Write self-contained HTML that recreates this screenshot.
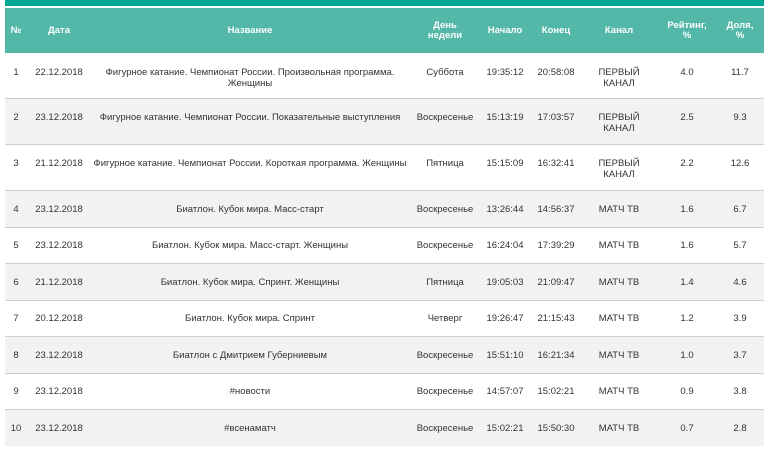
<!DOCTYPE html>
<html><head><meta charset="utf-8"><style>
body{margin:0;background:#fff;font-family:"Liberation Sans","DejaVu Sans",sans-serif;width:769px;height:449px;overflow:hidden;position:relative}
.top{position:absolute;left:5px;top:0;width:759px;height:6px;background:#00a694}
.hdr{position:absolute;left:5px;top:8px;width:759px;height:45px;background:#53b8a8}
.c{position:absolute;text-align:center;transform:translateX(-50%);white-space:nowrap;font-size:9.5px;color:#333;line-height:11px}
.h{color:#fff;font-weight:bold;font-size:9.5px;line-height:10px}
.row{position:absolute;left:5px;width:759px;border-bottom:1px solid #cfcfcf;box-sizing:border-box}
</style></head><body>
<div class="top"></div>
<div class="hdr"></div>
<div class="c h" style="left:16px;top:26px">№</div>
<div class="c h" style="left:59px;top:26px">Дата</div>
<div class="c h" style="left:250px;top:26px">Название</div>
<div class="c h" style="left:445px;top:21px">День<br>недели</div>
<div class="c h" style="left:505px;top:26px">Начало</div>
<div class="c h" style="left:556px;top:26px">Конец</div>
<div class="c h" style="left:619px;top:26px">Канал</div>
<div class="c h" style="left:687px;top:21px">Рейтинг,<br>%</div>
<div class="c h" style="left:740px;top:21px">Доля,<br>%</div>

<div class="row" style="top:53px;height:46px;background:#fff"></div>
<div class="row" style="top:99px;height:46px;background:#f2f2f2"></div>
<div class="row" style="top:145px;height:46px;background:#fff"></div>
<div class="row" style="top:191px;height:37px;background:#f2f2f2"></div>
<div class="row" style="top:228px;height:36px;background:#fff"></div>
<div class="row" style="top:264px;height:37px;background:#f2f2f2"></div>
<div class="row" style="top:301px;height:36px;background:#fff"></div>
<div class="row" style="top:337px;height:37px;background:#f2f2f2"></div>
<div class="row" style="top:374px;height:36px;background:#fff"></div>
<div class="row" style="top:410px;height:36px;background:#f2f2f2;border-bottom:none"></div>

<!-- row 1 -->
<div class="c" style="left:16px;top:67px">1</div><div class="c" style="left:59px;top:67px">22.12.2018</div>
<div class="c" style="left:250px;top:67px">Фигурное катание. Чемпионат России. Произвольная программа.<br>Женщины</div>
<div class="c" style="left:445px;top:67px">Суббота</div><div class="c" style="left:505px;top:67px">19:35:12</div><div class="c" style="left:556px;top:67px">20:58:08</div>
<div class="c" style="left:619px;top:67px">ПЕРВЫЙ<br>КАНАЛ</div><div class="c" style="left:687px;top:67px">4.0</div><div class="c" style="left:740px;top:67px">11.7</div>
<!-- row 2 -->
<div class="c" style="left:16px;top:112px">2</div><div class="c" style="left:59px;top:112px">23.12.2018</div>
<div class="c" style="left:250px;top:112px">Фигурное катание. Чемпионат России. Показательные выступления</div>
<div class="c" style="left:445px;top:112px">Воскресенье</div><div class="c" style="left:505px;top:112px">15:13:19</div><div class="c" style="left:556px;top:112px">17:03:57</div>
<div class="c" style="left:619px;top:112px">ПЕРВЫЙ<br>КАНАЛ</div><div class="c" style="left:687px;top:112px">2.5</div><div class="c" style="left:740px;top:112px">9.3</div>
<!-- row 3 -->
<div class="c" style="left:16px;top:158px">3</div><div class="c" style="left:59px;top:158px">21.12.2018</div>
<div class="c" style="left:250px;top:158px">Фигурное катание. Чемпионат России. Короткая программа. Женщины</div>
<div class="c" style="left:445px;top:158px">Пятница</div><div class="c" style="left:505px;top:158px">15:15:09</div><div class="c" style="left:556px;top:158px">16:32:41</div>
<div class="c" style="left:619px;top:158px">ПЕРВЫЙ<br>КАНАЛ</div><div class="c" style="left:687px;top:158px">2.2</div><div class="c" style="left:740px;top:158px">12.6</div>
<!-- row 4 -->
<div class="c" style="left:16px;top:204px">4</div><div class="c" style="left:59px;top:204px">23.12.2018</div>
<div class="c" style="left:250px;top:204px">Биатлон. Кубок мира. Масс-старт</div>
<div class="c" style="left:445px;top:204px">Воскресенье</div><div class="c" style="left:505px;top:204px">13:26:44</div><div class="c" style="left:556px;top:204px">14:56:37</div>
<div class="c" style="left:619px;top:204px">МАТЧ ТВ</div><div class="c" style="left:687px;top:204px">1.6</div><div class="c" style="left:740px;top:204px">6.7</div>
<!-- row 5 -->
<div class="c" style="left:16px;top:240px">5</div><div class="c" style="left:59px;top:240px">23.12.2018</div>
<div class="c" style="left:250px;top:240px">Биатлон. Кубок мира. Масс-старт. Женщины</div>
<div class="c" style="left:445px;top:240px">Воскресенье</div><div class="c" style="left:505px;top:240px">16:24:04</div><div class="c" style="left:556px;top:240px">17:39:29</div>
<div class="c" style="left:619px;top:240px">МАТЧ ТВ</div><div class="c" style="left:687px;top:240px">1.6</div><div class="c" style="left:740px;top:240px">5.7</div>
<!-- row 6 -->
<div class="c" style="left:16px;top:277px">6</div><div class="c" style="left:59px;top:277px">21.12.2018</div>
<div class="c" style="left:250px;top:277px">Биатлон. Кубок мира. Спринт. Женщины</div>
<div class="c" style="left:445px;top:277px">Пятница</div><div class="c" style="left:505px;top:277px">19:05:03</div><div class="c" style="left:556px;top:277px">21:09:47</div>
<div class="c" style="left:619px;top:277px">МАТЧ ТВ</div><div class="c" style="left:687px;top:277px">1.4</div><div class="c" style="left:740px;top:277px">4.6</div>
<!-- row 7 -->
<div class="c" style="left:16px;top:313px">7</div><div class="c" style="left:59px;top:313px">20.12.2018</div>
<div class="c" style="left:250px;top:313px">Биатлон. Кубок мира. Спринт</div>
<div class="c" style="left:445px;top:313px">Четверг</div><div class="c" style="left:505px;top:313px">19:26:47</div><div class="c" style="left:556px;top:313px">21:15:43</div>
<div class="c" style="left:619px;top:313px">МАТЧ ТВ</div><div class="c" style="left:687px;top:313px">1.2</div><div class="c" style="left:740px;top:313px">3.9</div>
<!-- row 8 -->
<div class="c" style="left:16px;top:350px">8</div><div class="c" style="left:59px;top:350px">23.12.2018</div>
<div class="c" style="left:250px;top:350px">Биатлон с Дмитрием Губерниевым</div>
<div class="c" style="left:445px;top:350px">Воскресенье</div><div class="c" style="left:505px;top:350px">15:51:10</div><div class="c" style="left:556px;top:350px">16:21:34</div>
<div class="c" style="left:619px;top:350px">МАТЧ ТВ</div><div class="c" style="left:687px;top:350px">1.0</div><div class="c" style="left:740px;top:350px">3.7</div>
<!-- row 9 -->
<div class="c" style="left:16px;top:386px">9</div><div class="c" style="left:59px;top:386px">23.12.2018</div>
<div class="c" style="left:250px;top:386px">#новости</div>
<div class="c" style="left:445px;top:386px">Воскресенье</div><div class="c" style="left:505px;top:386px">14:57:07</div><div class="c" style="left:556px;top:386px">15:02:21</div>
<div class="c" style="left:619px;top:386px">МАТЧ ТВ</div><div class="c" style="left:687px;top:386px">0.9</div><div class="c" style="left:740px;top:386px">3.8</div>
<!-- row 10 -->
<div class="c" style="left:16px;top:423px">10</div><div class="c" style="left:59px;top:423px">23.12.2018</div>
<div class="c" style="left:250px;top:423px">#всенаматч</div>
<div class="c" style="left:445px;top:423px">Воскресенье</div><div class="c" style="left:505px;top:423px">15:02:21</div><div class="c" style="left:556px;top:423px">15:50:30</div>
<div class="c" style="left:619px;top:423px">МАТЧ ТВ</div><div class="c" style="left:687px;top:423px">0.7</div><div class="c" style="left:740px;top:423px">2.8</div>
</body></html>
